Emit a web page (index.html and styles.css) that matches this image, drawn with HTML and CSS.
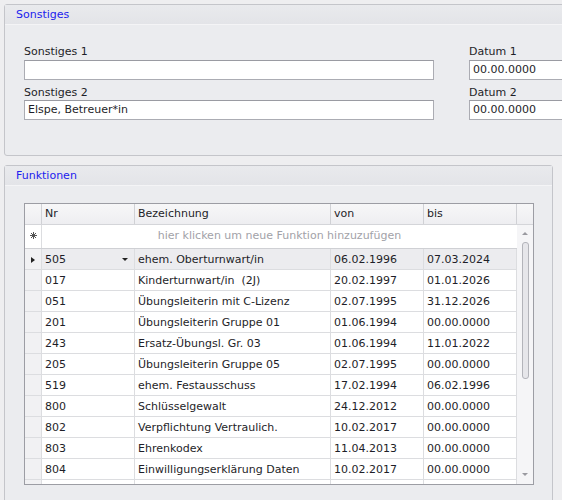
FILE: index.html
```html
<!DOCTYPE html>
<html>
<head>
<meta charset="utf-8">
<link rel="stylesheet" href="styles.css">
</head>
<body>
<div class="panel panel-top">
  <div class="panel-head">Sonstiges</div>
  <div class="fields">
    <div class="label">Sonstiges 1</div>
    <div class="label">Datum 1</div>
    <div class="input"></div>
    <div class="input date">00.00.0000</div>
    <div class="label second">Sonstiges 2</div>
    <div class="label second">Datum 2</div>
    <div class="input">Elspe, Betreuer*in</div>
    <div class="input date">00.00.0000</div>
  </div>
</div>

<div class="panel panel-bottom">
  <div class="panel-head">Funktionen</div>
  <div class="panel-body">
    <div class="grid">
      <div class="row head">
        <div class="c ind"></div>
        <div class="c nr">Nr</div>
        <div class="c bez">Bezeichnung</div>
        <div class="c von">von</div>
        <div class="c bis">bis</div>
        <div class="c sb"></div>
      </div>
      <div class="gbody">
        <div class="rows">
          <div class="row newrow">
            <div class="c ind star">
              <svg width="7" height="7" viewBox="0 0 7 7">
                <g stroke="#555" stroke-width="1">
                  <line x1="3.5" y1="0" x2="3.5" y2="7"/>
                  <line x1="0" y1="3.5" x2="7" y2="3.5"/>
                  <line x1="1" y1="1" x2="6" y2="6"/>
                  <line x1="6" y1="1" x2="1" y2="6"/>
                </g>
              </svg>
            </div>
            <div class="c hint">hier klicken um neue Funktion hinzuzufügen</div>
          </div>
          <div class="row sel">
            <div class="c ind"><span class="tri-right"></span></div>
            <div class="c nr">505<span class="tri-down"></span></div>
            <div class="c bez">ehem. Oberturnwart/in</div>
            <div class="c von">06.02.1996</div>
            <div class="c bis">07.03.2024</div>
          </div>
          <div class="row"><div class="c ind"></div><div class="c nr">017</div><div class="c bez">Kinderturnwart/in&nbsp; (2J)</div><div class="c von">20.02.1997</div><div class="c bis">01.01.2026</div></div>
          <div class="row"><div class="c ind"></div><div class="c nr">051</div><div class="c bez">Übungsleiterin mit C-Lizenz</div><div class="c von">02.07.1995</div><div class="c bis">31.12.2026</div></div>
          <div class="row"><div class="c ind"></div><div class="c nr">201</div><div class="c bez">Übungsleiterin Gruppe 01</div><div class="c von">01.06.1994</div><div class="c bis">00.00.0000</div></div>
          <div class="row"><div class="c ind"></div><div class="c nr">243</div><div class="c bez">Ersatz-Übungsl. Gr. 03</div><div class="c von">01.06.1994</div><div class="c bis">11.01.2022</div></div>
          <div class="row"><div class="c ind"></div><div class="c nr">205</div><div class="c bez">Übungsleiterin Gruppe 05</div><div class="c von">02.07.1995</div><div class="c bis">00.00.0000</div></div>
          <div class="row"><div class="c ind"></div><div class="c nr">519</div><div class="c bez">ehem. Festausschuss</div><div class="c von">17.02.1994</div><div class="c bis">06.02.1996</div></div>
          <div class="row"><div class="c ind"></div><div class="c nr">800</div><div class="c bez">Schlüsselgewalt</div><div class="c von">24.12.2012</div><div class="c bis">00.00.0000</div></div>
          <div class="row"><div class="c ind"></div><div class="c nr">802</div><div class="c bez">Verpflichtung Vertraulich.</div><div class="c von">10.02.2017</div><div class="c bis">00.00.0000</div></div>
          <div class="row"><div class="c ind"></div><div class="c nr">803</div><div class="c bez">Ehrenkodex</div><div class="c von">11.04.2013</div><div class="c bis">00.00.0000</div></div>
          <div class="row"><div class="c ind"></div><div class="c nr">804</div><div class="c bez">Einwilligungserklärung Daten</div><div class="c von">10.02.2017</div><div class="c bis">00.00.0000</div></div>
          <div class="row"><div class="c ind"></div><div class="c nr"></div><div class="c bez"></div><div class="c von"></div><div class="c bis"></div></div>
        </div>
        <div class="scrollbar">
          <span class="arrow-up"></span>
          <div class="thumb"></div>
          <span class="arrow-down"></span>
        </div>
      </div>
    </div>
  </div>
</div>
</body>
</html>
```

FILE: styles.css
```css
* { box-sizing: border-box; }

html, body {
  margin: 0;
  padding: 0;
  background: #eeeef0;
  overflow: hidden;
  height: 500px;
}

body {
  padding: 4px 0 0 4px;
  font-family: "DejaVu Sans", Verdana, sans-serif;
  font-size: 11px;
  color: #1e1e28;
}

.panel {
  border: 1px solid #c4c5ca;
  border-radius: 3px;
  background: #ebecef;
}

.panel-head {
  height: 20px;
  line-height: 19px;
  padding-left: 11px;
  color: #2222ee;
  background: linear-gradient(#e9eaed, #e3e4e8);
  border-bottom: 1px solid #f4f4f6;
}

.panel-top {
  width: 580px;
  height: 152px;
}

.fields {
  display: grid;
  grid-template-columns: 410px 120px;
  column-gap: 35px;
  padding: 19px 0 0 19px;
}

.label {
  height: 16px;
  line-height: 15px;
}

.label.second {
  height: 20px;
  padding-top: 5px;
}

.input {
  height: 20px;
  border: 1px solid #abacb3;
  border-top-color: #9a9ba2;
  background: #ffffff;
  padding-left: 3px;
  line-height: 18px;
}

.panel-bottom {
  margin-top: 9px;
  width: 549px;
  height: 360px;
}

.panel-body {
  padding: 17px 0 0 19px;
}

.grid {
  width: 510px;
  border: 1px solid #9c9da4;
  background: #ffffff;
}

.row {
  display: flex;
  height: 21px;
  border-bottom: 1px solid #dcdde0;
}

.c {
  height: 100%;
  border-right: 1px solid #dcdde0;
  padding-left: 3px;
  line-height: 21px;
  white-space: nowrap;
  overflow: hidden;
  position: relative;
}

.ind { width: 17px; padding: 0; background: #f1f1f3; }
.nr  { width: 93px; }
.bez { width: 196px; }
.von { width: 93px; }
.bis { width: 93px; }
.sb  { width: 16px; border-right: 0; }

.head {
  background: linear-gradient(#f7f7f8, #eeeef1);
  border-bottom: 1px solid #d4d5d9;
}
.head .c { border-right-color: #d0d1d5; line-height: 20px; }
.head .ind { background: transparent; }

.gbody {
  display: flex;
  height: 259px;
  overflow: hidden;
}

.rows {
  width: 492px;
}

.newrow {
  height: 24px;
  border-bottom: 1px solid #cfd0d4;
}

.newrow .c { line-height: 21px; }

.star {
  display: flex;
  justify-content: center;
  padding-top: 7px;
  background: #ffffff;
}

.hint {
  flex: 1;
  border-right: 0;
  text-align: center;
  color: #a2a2a8;
  padding: 0;
}

.sel .nr, .sel .bez, .sel .von, .sel .bis { background: #ececef; }

.tri-right {
  position: absolute;
  left: 6px;
  top: 8px;
  width: 0;
  height: 0;
  border-top: 3px solid transparent;
  border-bottom: 3px solid transparent;
  border-left: 4px solid #222;
}

.tri-down {
  position: absolute;
  right: 6px;
  top: 9px;
  width: 0;
  height: 0;
  border-left: 3px solid transparent;
  border-right: 3px solid transparent;
  border-top: 3px solid #222;
}

.scrollbar {
  width: 16px;
  position: relative;
  background: #f5f5f7;
}

.arrow-up {
  position: absolute;
  left: 5px;
  top: 7px;
  border-left: 3px solid transparent;
  border-right: 3px solid transparent;
  border-bottom: 3px solid #9a9aa0;
}

.arrow-down {
  position: absolute;
  left: 5px;
  bottom: 8px;
  border-left: 3px solid transparent;
  border-right: 3px solid transparent;
  border-top: 3px solid #9a9aa0;
}

.thumb {
  position: absolute;
  left: 5px;
  top: 17px;
  width: 7px;
  height: 137px;
  border: 1px solid #b3b4ba;
  border-radius: 3px;
  background: #e6e6ea;
}
```
